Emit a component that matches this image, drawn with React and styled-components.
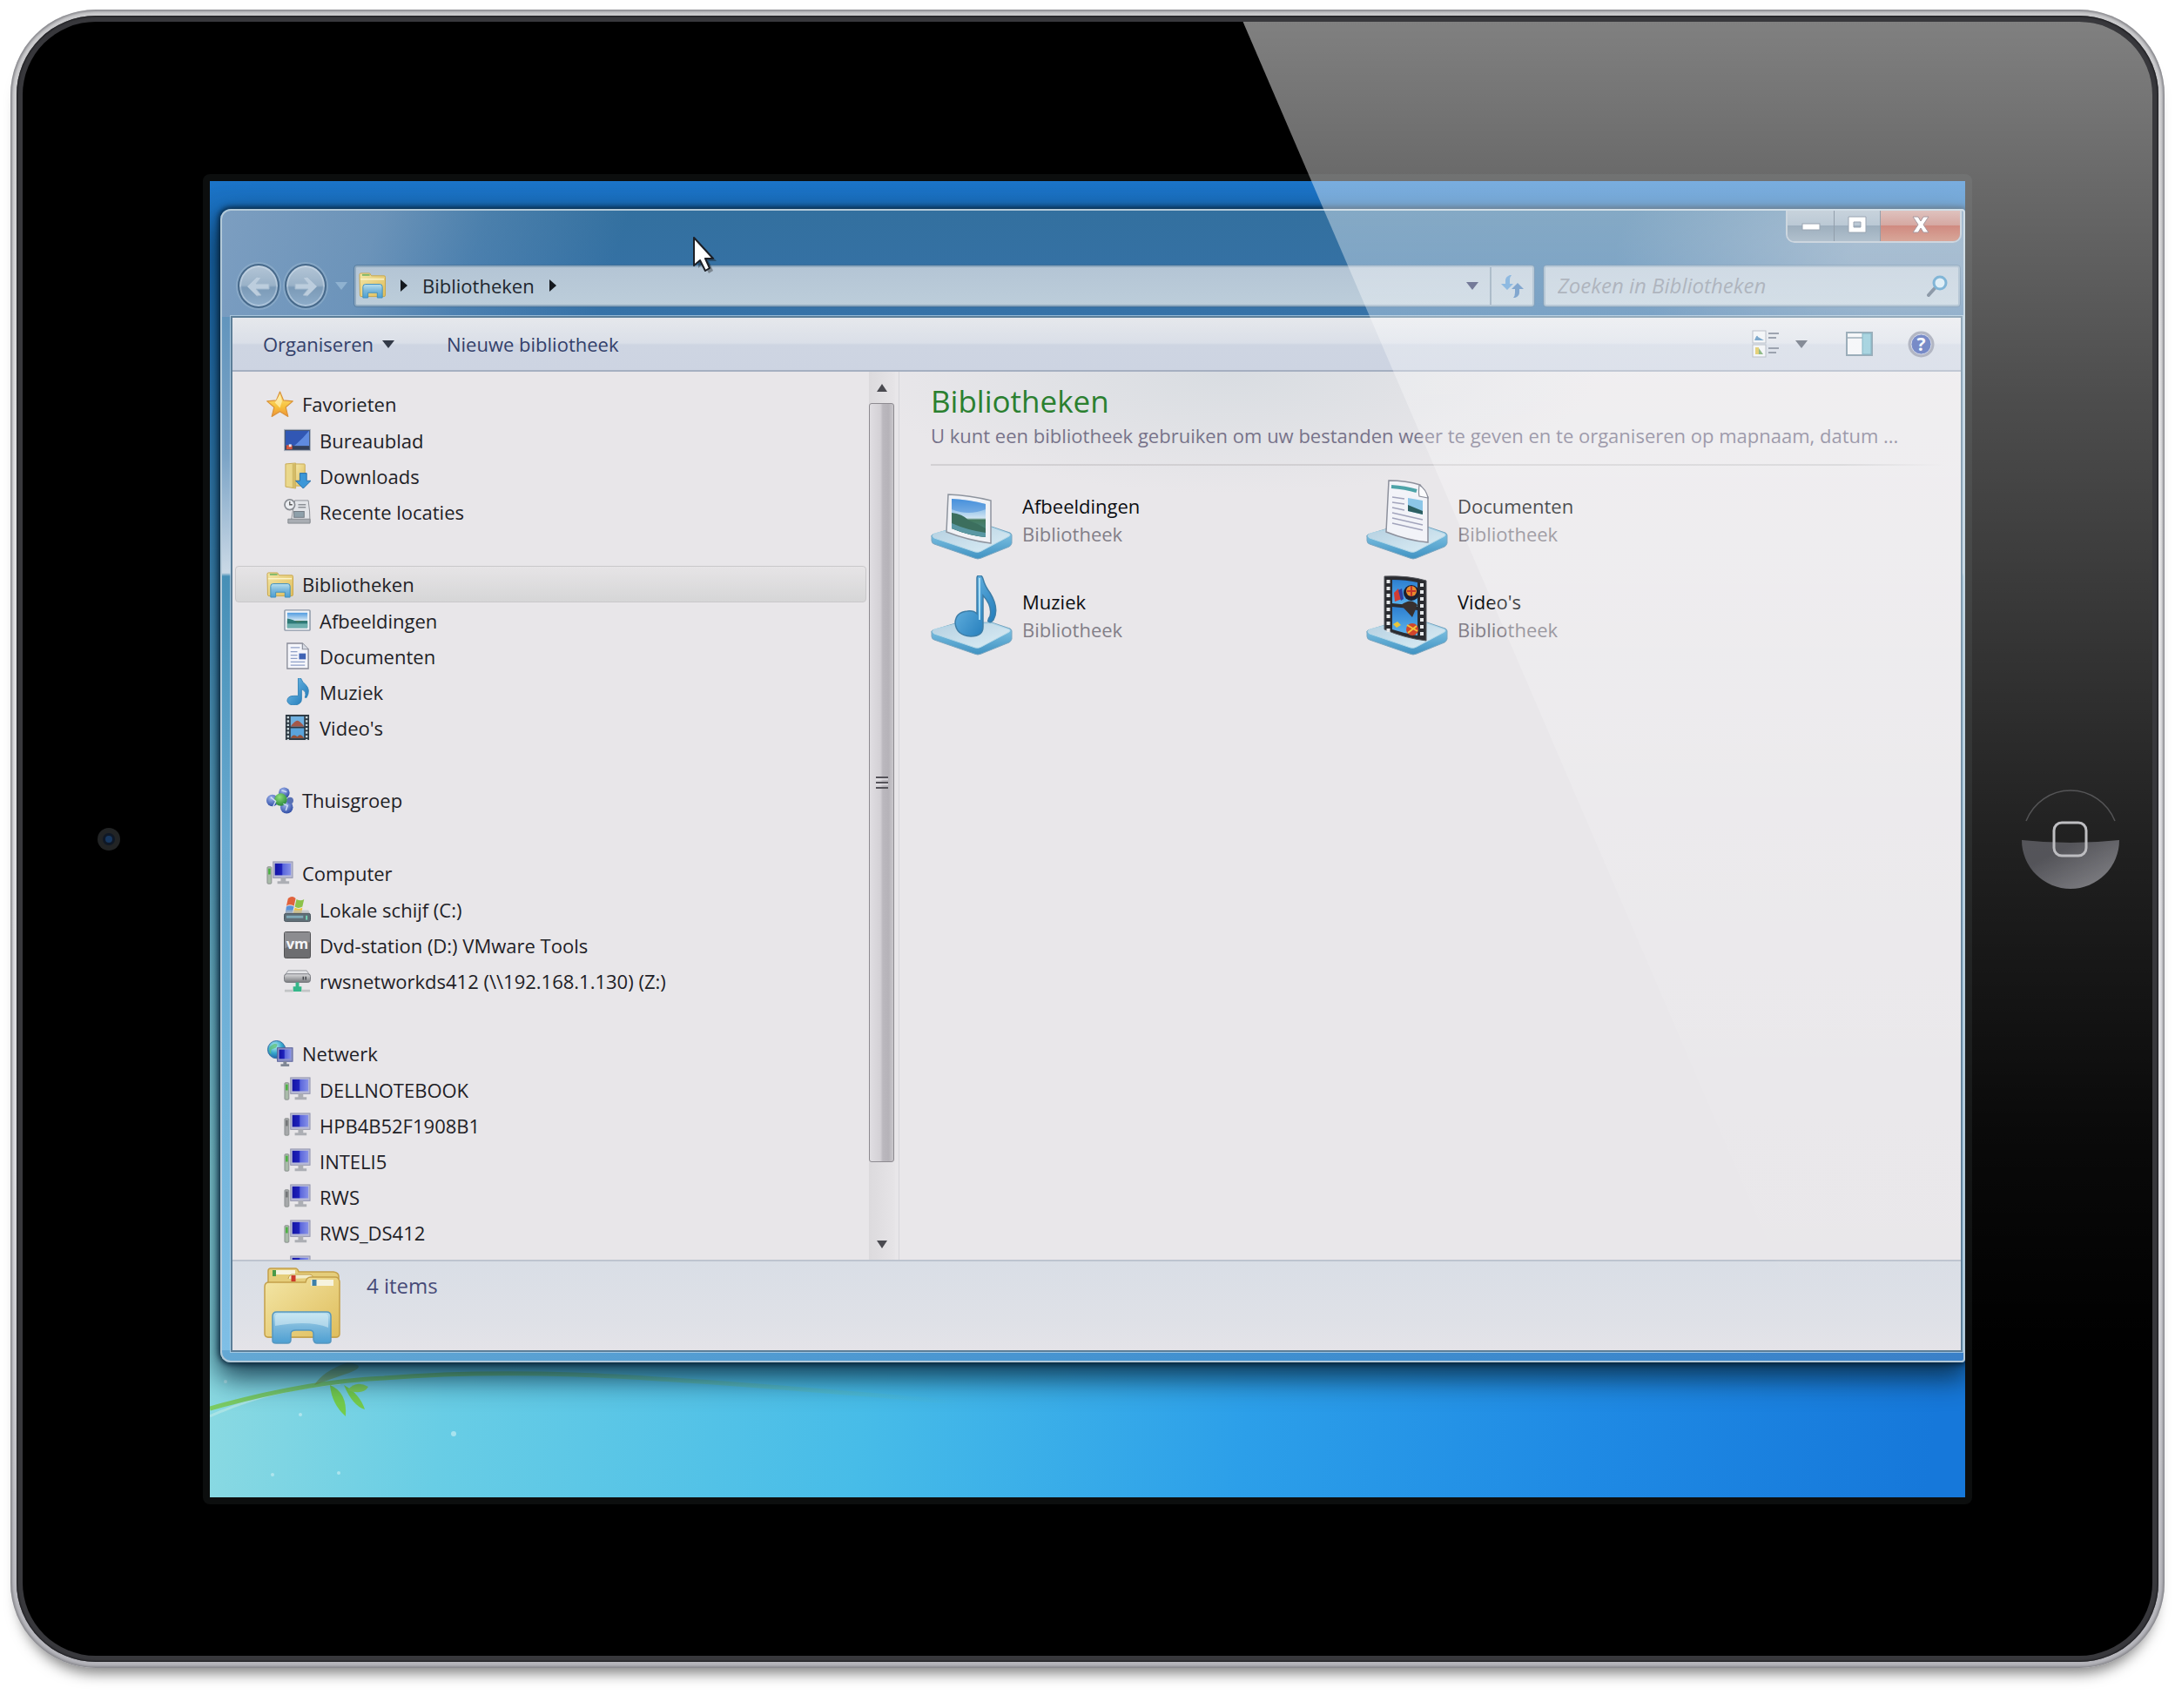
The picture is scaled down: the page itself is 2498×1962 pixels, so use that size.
import React from "react";
import styled, { createGlobalStyle } from "styled-components";

const GlobalStyle = createGlobalStyle`
  *, *::before, *::after { box-sizing: border-box; }
  body {
    margin: 0;
    background: #fff;
    font-family: "Open Sans", "Noto Sans", sans-serif;
    font-size: 22px;
    line-height: 32px;
    color: #1e2126;
  }
  button {
    font: inherit;
    color: inherit;
    background: none;
    border: 0;
    margin: 0;
    padding: 0;
    text-align: left;
    cursor: default;
  }
  svg { display: block; flex: none; }
`;

/* ---------- tablet ---------- */

const Page = styled.div`
  padding: 11px 12px 46px;
`;

const Shell = styled.div`
  padding: 7px;
  border-radius: 98px;
  background: linear-gradient(#c9c9cb, #e2e2e4 30%, #dcdce0 70%, #b4b4ba);
  box-shadow: inset 0 0 3px 2px #85858a, 0 16px 16px -10px rgba(0, 0, 0, 0.5);
`;

const Rim = styled.div`
  padding: 7px;
  border-radius: 91px;
  background: #38383c;
  box-shadow: inset 0 0 2px 1px #1a1a1d;
`;

const Face = styled.div`
  position: relative;
  display: flex;
  align-items: center;
  padding: 175px 0 174px;
  border-radius: 84px;
  background: #000;
  overflow: hidden;
`;

const Side = styled.div`
  flex: none;
  width: 207px;
  display: flex;
  justify-content: center;
  padding: ${(p) => (p.$home ? "0 0 0 18px" : "0 10px 0 0")};
`;

const HomeButton = styled.button`
  width: 114px;
  height: 114px;
  border-radius: 50%;
`;

const Bezel = styled.div`
  flex: 1;
  min-width: 0;
  padding: 8px;
  border-radius: 8px;
  background: #0c0e0e;
`;

const Glare = styled.div`
  position: absolute;
  inset: 0;
  pointer-events: none;
  clip-path: polygon(57.3% 0, 100% 0, 100% 100%, 90.3% 100%);
  background: linear-gradient(
    rgba(255, 255, 255, 0.5),
    rgba(255, 255, 255, 0.41) 10%,
    rgba(255, 255, 255, 0.3) 23%,
    rgba(255, 255, 255, 0.13) 50%,
    rgba(255, 255, 255, 0.04) 68%,
    rgba(255, 255, 255, 0) 82%
  );
`;

const Desktop = styled.div`
  position: relative;
  display: flex;
  aspect-ratio: 4 / 3;
  padding: 32px 0 155px 12px;
  overflow: hidden;
  background:
    linear-gradient(rgba(27, 116, 200, 1), rgba(24, 104, 176, 1) 6%, rgba(24, 110, 170, 0) 75%),
    linear-gradient(97deg, #94dde1 4%, #68cde5 20%, #47bce8 42%, #2c9fe9 62%, #1f8ae4 80%, #1678da 98%);
`;

const Branch = styled.svg`
  position: absolute;
  left: 0;
  bottom: 0;
`;

const Pointer = styled.svg`
  position: absolute;
  left: 554px;
  top: 64px;
`;

/* ---------- window ---------- */

const Window = styled.section`
  position: relative;
  flex: 1;
  min-width: 0;
  display: flex;
  flex-direction: column;
  border: 2px solid #b3c9d8;
  border-radius: 12px 4px 4px 12px;
  background:
    linear-gradient(108deg, rgba(132, 163, 196, 0.9), rgba(126, 159, 193, 0.75) 9%, rgba(110, 150, 190, 0.4) 15%, rgba(90, 140, 185, 0) 23%) no-repeat 0 0 / 100% 122px,
    radial-gradient(ellipse 340px 150px at 97% 50px, rgba(140, 165, 190, 0.7) 20%, rgba(140, 165, 190, 0)) no-repeat 0 0 / 100% 122px,
    linear-gradient(#33709f, #3672a8) no-repeat 0 0 / 100% 122px,
    linear-gradient(90deg, #64a8d4, #3f8fd0 60%, #3a80c8) no-repeat 0 100% / 100% 12px,
    linear-gradient(#6295bd 122px, #7aa3c6 280px, #cbd9e6 416px, #468fb6 420px, #67a9d0 55%, #7fbfe6);
  box-shadow: 0 0 6px 2px rgba(4, 30, 52, 0.9), 0 14px 32px 4px rgba(10, 40, 60, 0.85);
`;

const Header = styled.header`
  display: flex;
  flex-direction: column;
  gap: 24px;
  padding-bottom: 9px;
`;

const Caption = styled.div`
  display: flex;
  justify-content: flex-end;
  padding-right: 2px;
`;

const CaptionGroup = styled.div`
  display: flex;
  height: 37px;
  border: 2px solid #aebdcb;
  border-top: 0;
  border-radius: 0 0 10px 10px;
  overflow: hidden;
`;

const CaptionButton = styled.button`
  display: flex;
  align-items: center;
  justify-content: center;
  width: ${(p) => (p.$close ? 92 : 53)}px;
  padding-bottom: 4px;
  border-left: ${(p) => (p.$first ? 0 : 1)}px solid #4d6276;
  background: ${(p) =>
    p.$close
      ? "linear-gradient(#c99a94, #bb7065 48%, #b2402f 50%, #c0705a)"
      : "linear-gradient(#a3b5c5, #8fa6ba 48%, #5f7c94 50%, #8099ae)"};
`;

const NavRow = styled.div`
  display: flex;
  align-items: center;
  padding: 0 4px 0 18px;
`;

const History = styled.div`
  display: flex;
  align-items: center;
  gap: 6px;
  margin-right: 8px;
`;

const RoundButton = styled.button`
  display: flex;
  align-items: center;
  justify-content: center;
  width: 48px;
  height: 51px;
  border: 2px solid #47698a;
  border-radius: 50%;
  background: linear-gradient(#b3c5d6, #9ab2c8 48%, #7b9ab7 54%, #8eadca);
  box-shadow: inset 0 0 0 2px rgba(220, 232, 244, 0.4), 0 0 0 2px rgba(170, 195, 215, 0.35);
`;

const HistoryMenu = styled.button`
  padding: 8px 0 8px 4px;
`;

const Field = styled.div`
  display: flex;
  align-items: center;
  height: 47px;
  border: 2px solid #8fa9bf;
  outline: 1px solid rgba(70, 105, 140, 0.5);
  border-radius: 3px;
  background: linear-gradient(#b4c5d5, #bccdda);
`;

const Address = styled(Field)`
  flex: 1;
  min-width: 0;
  margin-right: 11px;
  padding-left: 3px;
`;

const Crumbs = styled.nav`
  flex: 1;
  display: flex;
  align-items: center;
  gap: 17px;
  padding-bottom: 2px;
  color: #20262e;
`;

const AddressButton = styled.button`
  display: flex;
  align-items: center;
  justify-content: center;
  align-self: stretch;
  width: ${(p) => (p.$divided ? 49 : 40)}px;
  border-left: ${(p) => (p.$divided ? "2px solid #7f97ac" : "0")};
`;

const Search = styled(Field)`
  width: 478px;
  padding: 0 12px 0 12px;
`;

const SearchInput = styled.input`
  flex: 1;
  min-width: 0;
  padding: 0 2px 2px;
  border: 0;
  outline: 0;
  background: none;
  font: italic 24px/32px "Open Sans", "Noto Sans", sans-serif;
  &::placeholder { color: #838c9a; opacity: 1; }
`;

const Client = styled.div`
  flex: 1;
  min-height: 0;
  display: flex;
  flex-direction: column;
  margin: 0 1px 10px 10px;
  border: 2px solid #5c7e98;
  outline: 1px solid rgba(190, 215, 232, 0.7);
  background: #e8e6e9;
`;

const Toolbar = styled.div`
  display: flex;
  align-items: center;
  flex: none;
  height: 62px;
  padding: 0 30px 0 35px;
  border-bottom: 2px solid #a5afc1;
  background: linear-gradient(#e6e8ec, #dadfe8 48%, #ced5e2 52%, #cdd4e2);
  color: #33406a;
`;

const ToolButton = styled.button`
  display: flex;
  align-items: center;
  gap: 10px;
  margin-right: ${(p) => p.$gap || 0}px;
`;

const Spacer = styled.div`
  flex: 1;
`;

const Body = styled.div`
  flex: 1;
  min-height: 0;
  display: flex;
`;

const Tree = styled.nav`
  flex: none;
  width: 731px;
  padding: 16px 3px 0;
  overflow: hidden;
`;

const Group = styled.ul`
  list-style: none;
  margin: 0 0 42px;
  padding: 0;
`;

const TreeRow = styled.button`
  display: flex;
  align-items: center;
  gap: 10px;
  width: 100%;
  height: ${(p) => (p.$child ? 41 : 42)}px;
  padding-left: ${(p) => (p.$child ? 55 : 35)}px;
  border: 1px solid ${(p) => (p.$active ? "#c9c8ca" : "transparent")};
  border-radius: 4px;
  background: ${(p) => (p.$active ? "linear-gradient(#e6e4e6, #d6d6d7)" : "none")};
  white-space: nowrap;
`;

const Scrollbar = styled.div`
  flex: none;
  width: 30px;
  display: flex;
  flex-direction: column;
  background: linear-gradient(90deg, #dcdadd, #e6e4e7);
`;

const ScrollButton = styled.button`
  display: flex;
  align-items: center;
  justify-content: center;
  flex: none;
  height: 36px;
`;

const ScrollTrack = styled.div`
  flex: 1;
  min-height: 0;
`;

const Thumb = styled.div`
  display: flex;
  align-items: center;
  justify-content: center;
  height: 92%;
  margin-right: 1px;
  border: 1px solid #8d8a90;
  border-radius: 3px;
  background: linear-gradient(90deg, #e0dee2, #d3d0d5 45%, #bbb8be 55%, #b6b3b9 80%, #cac8cc);
`;

const Main = styled.main`
  flex: 1;
  min-width: 0;
  margin-left: 4px;
  padding: 11px 20px 0 36px;
  border-left: 1px solid #d6d5da;
  background:
    radial-gradient(ellipse 420px 140px at 380px 0, rgba(206, 214, 220, 0.6), rgba(206, 214, 220, 0)),
    #e9e7ea;
`;

const Title = styled.h1`
  margin: 0;
  font-size: 35px;
  line-height: 46px;
  font-weight: 400;
  color: #2b8030;
`;

const Lead = styled.p`
  margin: 0 40px 17px 0;
  color: #77738a;
  white-space: nowrap;
`;

const Rule = styled.hr`
  height: 2px;
  margin: 0;
  border: 0;
  background: linear-gradient(90deg, #d2d0d3, #cfced1 90%, rgba(207, 206, 209, 0));
`;

const Libraries = styled.div`
  display: grid;
  grid-template-columns: repeat(auto-fill, 500px);
  margin-top: 7px;
`;

const Library = styled.button`
  display: flex;
  align-items: center;
  gap: 11px;
  height: 110px;
`;

const Name = styled.span`
  display: block;
  color: #0c0e12;
`;

const Kind = styled.span`
  display: block;
  color: #827e88;
`;

const Status = styled.footer`
  display: flex;
  align-items: flex-start;
  flex: none;
  gap: 30px;
  height: 104px;
  padding: 7px 0 0 36px;
  border-top: 2px solid #bdc4cf;
  background: linear-gradient(#d9dee6, #dfe1e7 70%, #e4e3e8);
  color: #474b78;
  font-size: 24px;
`;

const StatusText = styled.span`
  padding-top: 5px;
`;

/* ---------- drawings ---------- */

const Paints = () => (
  <svg width="0" height="0" style={{ position: "absolute" }} aria-hidden="true">
    <defs>
      <linearGradient id="folder" x1="0" y1="0" x2="1" y2="1">
        <stop offset="0" stopColor="#f3e6a6" />
        <stop offset="1" stopColor="#dfbd5c" />
      </linearGradient>
      <linearGradient id="stand" x1="0" y1="0" x2="0" y2="1">
        <stop offset="0" stopColor="#b9dfee" />
        <stop offset=".45" stopColor="#7db9dc" />
        <stop offset="1" stopColor="#4d9fd2" />
      </linearGradient>
      <linearGradient id="screen" x1="0" y1="0" x2="1" y2="0">
        <stop offset="0" stopColor="#1414a4" />
        <stop offset=".42" stopColor="#1e22bc" />
        <stop offset=".5" stopColor="#5a66dc" />
        <stop offset="1" stopColor="#8791e8" />
      </linearGradient>
      <linearGradient id="slab" x1="0" y1="0" x2="1" y2="1">
        <stop offset="0" stopColor="#b4cfe0" />
        <stop offset="1" stopColor="#dceef6" />
      </linearGradient>
      <linearGradient id="slabside" x1="0" y1="0" x2="0" y2="1">
        <stop offset="0" stopColor="#8fcdea" />
        <stop offset="1" stopColor="#3f92c2" />
      </linearGradient>
      <linearGradient id="note" x1="0" y1="0" x2="1" y2="1">
        <stop offset="0" stopColor="#7cc4ec" />
        <stop offset="1" stopColor="#1672b4" />
      </linearGradient>
      <linearGradient id="photo" x1="0" y1="0" x2="0" y2="1">
        <stop offset="0" stopColor="#4f9be0" />
        <stop offset=".5" stopColor="#cfe4f2" />
        <stop offset=".55" stopColor="#44795e" />
        <stop offset="1" stopColor="#4d8d96" />
      </linearGradient>
      <linearGradient id="star" x1="0" y1="0" x2="0" y2="1">
        <stop offset="0" stopColor="#fbe48a" />
        <stop offset=".6" stopColor="#f7c23c" />
        <stop offset="1" stopColor="#ee9138" />
      </linearGradient>
      <radialGradient id="globe" cx=".4" cy=".3" r=".8">
        <stop offset="0" stopColor="#bff0f4" />
        <stop offset=".5" stopColor="#35a6cc" />
        <stop offset="1" stopColor="#1c4f9c" />
      </radialGradient>
      <radialGradient id="orb" cx=".4" cy=".3" r=".8">
        <stop offset="0" stopColor="#9fb4ec" />
        <stop offset="1" stopColor="#203f9c" />
      </radialGradient>
      <radialGradient id="leaf" cx=".4" cy=".3" r=".8">
        <stop offset="0" stopColor="#8fe07a" />
        <stop offset="1" stopColor="#1d7d34" />
      </radialGradient>
      <linearGradient id="metal" x1="0" y1="0" x2="0" y2="1">
        <stop offset="0" stopColor="#dcdcde" />
        <stop offset="1" stopColor="#77797d" />
      </linearGradient>
      <linearGradient id="dish" x1="0" y1="0" x2="1" y2="1">
        <stop offset=".3" stopColor="#3c3c42" />
        <stop offset="1" stopColor="#77777c" />
      </linearGradient>
      <linearGradient id="twig" x1="0" y1="0" x2="1" y2="0">
        <stop offset="0" stopColor="#7bcb62" />
        <stop offset=".35" stopColor="#6cc07c" />
        <stop offset="1" stopColor="#5fbcb0" stopOpacity="0" />
      </linearGradient>
      <linearGradient id="balloon" x1="0" y1="0" x2="0" y2="1">
        <stop offset="0" stopColor="#2d7fd0" />
        <stop offset="1" stopColor="#5db4ee" />
      </linearGradient>
    </defs>
  </svg>
);

const Small = ({ children }) => (
  <svg width="31" height="31" viewBox="0 0 32 32" aria-hidden="true">{children}</svg>
);

const FolderIcon = () => (
  <Small>
    <path d="M1 3.500q0-1.500 1.500-1.500H13l2 3h15q1.500 0 1.500 1.500V28q0 1.500-1.500 1.500H3Q1.500 29.500 1.500 28Z" fill="url(#folder)" stroke="#c9a548" />
    <path d="M4 4h9" stroke="#7fb86a" strokeWidth="2" />
    <path d="M2 9h28" stroke="#fbf3c8" strokeWidth="1.500" />
    <path d="M5 31V18q0-3 3-3h17q3 0 3 3v13h-6v-6H11v6Z" fill="url(#stand)" stroke="#3f8fc0" />
  </Small>
);

const StarIcon = () => (
  <Small>
    <path d="M16 1l4.300 10.300 11 .9-8.400 7.200 2.700 11L16 24.400 6.400 30.400l2.700-11L.7 12.200l11-.9Z" fill="url(#star)" stroke="#d9923a" strokeWidth="1.200" strokeLinejoin="round" />
    <path d="M16 4l2.600 8-2.600 8-6-6Z" fill="#fff3bc" opacity=".7" />
  </Small>
);

const DesktopIcon = () => (
  <Small>
    <rect x=".5" y="3.500" width="31" height="25" fill="#4b5a72" stroke="#aeb4bf" />
    <rect x="2" y="5" width="28" height="18" fill="#3157b4" />
    <path d="M30 5v18H12Q22 15 30 5Z" fill="#5f8be0" />
    <rect x="2" y="23" width="28" height="4" fill="#33405a" />
    <rect x="3" y="22" width="7" height="5" fill="#d6553c" />
    <rect x="6" y="21" width="3" height="3" fill="#e9e9f0" />
  </Small>
);

const DownloadsIcon = () => (
  <Small>
    <path d="M2 2l12-1v30L2 29Z" fill="#ead88c" stroke="#c8a953" />
    <path d="M14 2h10q1 0 1 1v25H14Z" fill="url(#folder)" stroke="#c8a953" />
    <path d="M10 2l4-1v30l-4-1Z" fill="#d3bb68" />
    <path d="M19 13h8v9h5l-9 9-9-9h5Z" fill="#3c97d8" stroke="#2a6ea8" />
  </Small>
);

const RecentIcon = () => (
  <Small>
    <path d="M13 3h16q2 12 2 26H7q2-1 3-10Z" fill="#e2e4e8" stroke="#8c9096" />
    <path d="M5 25h26v5H5Z" fill="#a9adb3" stroke="#85898f" />
    <rect x="12" y="16" width="12" height="7" fill="#8ea0aa" stroke="#737a82" />
    <path d="M17 8h9M17 11h9" stroke="#8c9096" strokeWidth="1.500" />
    <circle cx="7" cy="8" r="6" fill="#eceef2" stroke="#888c92" strokeWidth="1.800" />
    <path d="M7 4v4h3" stroke="#555" fill="none" strokeWidth="1.300" />
  </Small>
);

const PictureIcon = () => (
  <Small>
    <rect x="1" y="4" width="30" height="24" rx="1" fill="#f3f5f8" stroke="#8c97a6" strokeWidth="1.500" />
    <rect x="4" y="7" width="24" height="18" fill="url(#photo)" />
    <path d="M4 14q8 1 12 5 7-3 12-2v8H4Z" fill="#2f7a78" />
    <path d="M4 20h24v5H4Z" fill="#6fb0ae" />
  </Small>
);

const DocIcon = () => (
  <Small>
    <path d="M4 1h18l7 7v23H4Z" fill="#f5f6fb" stroke="#898c99" strokeWidth="1.400" />
    <path d="M22 1v7h7" fill="#d9dde6" stroke="#898c99" strokeWidth="1.200" />
    <path d="M8 6h11M8 11h8M8 15h8M8 19h8M8 23h17M8 27h17" stroke="#8fa0c8" strokeWidth="1.300" />
    <rect x="18" y="13" width="8" height="7" fill="#3f63b4" />
  </Small>
);

const MusicIcon = () => (
  <Small>
    <path d="M17 0h3q2 5 6 8 6 6 1 15h-2q3-7-4-10v12q0 6-8 7-8 0-9-5 0-6 8-6h5Z" fill="url(#note)" stroke="#3a86b8" />
  </Small>
);

const VideoIcon = () => (
  <Small>
    <rect x="2" y="1" width="28" height="30" fill="#2d3842" />
    <rect x="8" y="3" width="16" height="12" fill="#6fb0e0" />
    <rect x="8" y="17" width="16" height="12" fill="#5aa4dc" />
    <path d="M8 15q5-7 8-7t8 7Z" fill="#a3584a" />
    <path d="M8 29q3-6 8-2 4-5 8 2Z" fill="#93533c" />
    <path d="M5 3v28M27 3v28" stroke="#c9d8dc" strokeWidth="2.500" strokeDasharray="2.500 2" />
  </Small>
);

const HomegroupIcon = () => (
  <Small>
    <circle cx="21" cy="7" r="6.500" fill="url(#orb)" />
    <circle cx="7" cy="16" r="7" fill="url(#orb)" />
    <circle cx="24" cy="24" r="7.500" fill="url(#orb)" />
    <circle cx="28" cy="16" r="4" fill="#5871b4" />
    <circle cx="17" cy="15" r="7.500" fill="url(#leaf)" />
    <path d="M5 12l6 5-3 6M20 20l5 2-2 6M18 4l6 2" stroke="#cfdcf4" strokeWidth="1.500" fill="none" />
  </Small>
);

const ComputerIcon = ({ off }) => (
  <Small>
    <rect x="1" y="8" width="5" height="20" rx="1" fill={off ? "#a6a8aa" : "#a9bba9"} stroke="#8b8f8f" />
    <path d="M3.500 10v7" stroke={off ? "#707274" : "#46b03c"} strokeWidth="2.500" />
    <rect x="8" y="2" width="23" height="19" fill="#b9bbd6" stroke="#9294ac" />
    <rect x="10" y="4" width="19" height="14" fill="url(#screen)" />
    <path d="M17 21h6v4h4v3H13v-3h4Z" fill="#acaeb4" />
  </Small>
);

const DiskIcon = () => (
  <Small>
    <path d="M5 3q5-4 9 0l-2 9q-5-3-9 0Z" fill="#e0623c" />
    <path d="M15 4q5 3 9 0l-2 9q-5 3-9 0Z" fill="#8cc24a" />
    <path d="M3 13q4-3 9 0l-2 7H2Z" fill="#5b93d8" />
    <path d="M13 14q5 3 9 0l-1 7H11Z" fill="#f0c63e" />
    <path d="M3 17h26l3 6H0Z" fill="#b7bcc0" opacity=".65" />
    <rect x=".5" y="21" width="31" height="9.500" rx="2" fill="#5f6e77" stroke="#48545c" />
    <path d="M3 25h20" stroke="#7fa9b8" strokeWidth="3" />
    <path d="M27 23.500v5" stroke="#74d6b4" strokeWidth="2" />
  </Small>
);

const VmIcon = () => (
  <Small>
    <rect x=".5" y=".5" width="31" height="31" rx="2" fill="#6d6d70" stroke="#4d4d50" />
    <path d="M1 1h30v12Q15 12 1 20Z" fill="#8c8c90" />
    <text x="16" y="21" textAnchor="middle" fontSize="17" fontWeight="700" fill="#f4f4f6">vm</text>
  </Small>
);

const NetDriveIcon = () => (
  <Small>
    <path d="M5 4h22l4 6H1Z" fill="#e4e5e8" stroke="#989aa0" />
    <rect x=".5" y="8" width="31" height="10" rx="3" fill="url(#metal)" stroke="#77797f" />
    <path d="M23 11v4M26 11v4" stroke="#44474c" strokeWidth="1.500" />
    <path d="M14 18h4v5h3v6H11v-6h3Z" fill="#35b78a" />
    <path d="M1 28h10M21 28h10" stroke="#c2c4c6" strokeWidth="3" />
  </Small>
);

const NetworkIcon = () => (
  <Small>
    <circle cx="12" cy="11" r="10.500" fill="url(#globe)" stroke="#3a6fa4" />
    <path d="M4 8q5-6 9-3-1 5-5 5t-2 7q-4-3-2-9Z" fill="#5cc07c" opacity=".8" />
    <rect x="13" y="9" width="18" height="16" fill="#8f96c8" stroke="#565e98" />
    <rect x="15" y="11" width="14" height="11" fill="url(#screen)" />
    <path d="M20 25h4v3h3v3h-10v-3h3Z" fill="#7f8794" />
  </Small>
);

const StackIcon = () => (
  <svg width="88" height="88" viewBox="0 0 88 88" aria-hidden="true">
    <path d="M5 4q0-3 3-3h28q3 0 4 4h40q6 1 6 5v66q0 4-4 4H5Z" fill="#e5cd7a" stroke="#c4a04a" strokeWidth="1.500" />
    <path d="M14 3h22v5H14Z" fill="#f6f3df" />
    <path d="M12 3v7" stroke="#4b9a48" strokeWidth="4" />
    <path d="M28 13q1-5 5-5h20q3 0 4 4" fill="#f3ecc9" stroke="#c4a04a" />
    <path d="M34 9v7" stroke="#cc3b2c" strokeWidth="5" />
    <path d="M1 22q0-5 5-5h42q1-6 6-6h28q4 0 5 5v60q0 4-4 4H5q-4 0-4-4Z" fill="url(#folder)" stroke="#c4a04a" strokeWidth="1.500" />
    <rect x="54" y="14" width="26" height="7" fill="#f6f3df" />
    <path d="M58 14v7" stroke="#3d80a8" strokeWidth="5" />
    <path d="M10 84V56q0-5 5-5h57q5 0 5 5v28q0 3-4 3H61q-3 0-4-4v-7q0-4-5-4H37q-6 0-6 4v7q0 4-4 4H14q-4 0-4-3Z" fill="url(#stand)" stroke="#5597c0" strokeWidth="1.500" />
    <path d="M13 57q0-4 4-4h53q4 0 4 4v12Q52 60 13 67Z" fill="#d8eef6" opacity=".55" />
  </svg>
);

const Big = ({ children }) => (
  <svg width="94" height="92" viewBox="0 0 94 92" aria-hidden="true">
    <path d="M1 66q-1-2 1-3l33-10q18 2 35 1l21 7q2 1 2 3v9q-1 3-3 4L58 90q-4 2-8 0L4 74q-3-1-3-4Z" fill="url(#slabside)" stroke="#7ba6c0" strokeWidth="1" />
    <path d="M2 64q0-1 2-2l32-8q18 2 34 1l20 7q2 1 0 3L58 82q-3 2-7 1L4 67q-2-1-2-3Z" fill="url(#slab)" stroke="#b4d8e8" />
    {children}
  </svg>
);

const BigPicture = () => (
  <Big>
    <path d="M20 17q25 1 49 7v49Q44 70 18 60Z" fill="#f1f2f6" stroke="#8e949e" strokeWidth="1.500" />
    <path d="M24 22q20 1 39 6v38q-20-2-39-10Z" fill="url(#photo)" />
    <path d="M24 22q20 1 39 6v6q-20 8-39 0Z" fill="#3d86d8" opacity=".5" />
    <path d="M24 38q12 1 20 9 9 3 19 9v10q-20-2-39-10Z" fill="#3c6f5e" />
    <path d="M24 50q18 8 39 11v5q-20-2-39-10Z" fill="#5a98a4" />
  </Big>
);

const BigDocument = () => (
  <Big>
    <path d="M26 1q20 0 36 5l9 14v52Q48 70 23 60Z" fill="#f2f3f8" stroke="#8d909c" strokeWidth="1.500" />
    <path d="M61 6q-1 9 0 13l10 2Q69 11 61 6Z" fill="#fbfbfd" stroke="#8d909c" strokeWidth="1.200" />
    <path d="M29 8q16 1 29 5" fill="none" stroke="#4da3a8" strokeWidth="4" />
    <path d="M30 20l14 2M30 26l14 2M30 32l14 3M30 38l35 8M30 44l35 8M30 50l35 8" stroke="#a2a4bc" strokeWidth="1.600" />
    <path d="M48 21l17 3v16l-17-4Z" fill="#8cc6e8" />
    <path d="M48 29l17 7v4l-17-4Z" fill="#2c5f62" />
  </Big>
);

const BigMusic = () => (
  <Big>
    <path d="M53 3q0-3 3-3 3 0 4 4 2 8 8 16 11 18 4 31-3 4-6 2-1-2 2-6 3-12-8-24v36q0 11-14 11-17-1-18-16 1-12 14-13 7-1 11 3Z" fill="url(#note)" stroke="#3d7ea8" strokeWidth="1.500" />
    <path d="M56 3v48" stroke="#a9dcf4" strokeWidth="2" />
  </Big>
);

const BigVideo = () => (
  <Big>
    <path d="M21 1q28-1 48 5v69Q44 72 21 62Z" fill="#2b2c31" stroke="#55575c" />
    <path d="M30 5q16 0 29 3v28q-14-3-29-4Z" fill="url(#balloon)" />
    <path d="M30 36q15 1 29 4v29q-14-2-29-7Z" fill="url(#balloon)" />
    <path d="M32 20l5-5 4 12-8 3Z" fill="#d03c34" />
    <path d="M37 17l4-2 2 12-3 2Z" fill="#2e3fa0" />
    <circle cx="52" cy="20" r="9" fill="#1e2030" />
    <circle cx="52" cy="18" r="6" fill="#e98a2c" />
    <path d="M52 12v12M47 18h10" stroke="#c6362c" strokeWidth="2" />
    <path d="M40 34q12-9 19 0l-6 14Z" fill="#38302f" />
    <circle cx="53" cy="62" r="7" fill="#d2452c" />
    <path d="M47 57l12 7M48 66l10-8" stroke="#f2c33a" strokeWidth="2" />
    <path d="M31 56l5-3 4 4-5 3Z" fill="#e8c53a" />
    <path d="M25.500 5v60M64 9v64" stroke="#e6e8ea" strokeWidth="4" strokeDasharray="4 4" />
  </Big>
);

const Triangle = ({ dir = "down", color = "#333a48", w = 14 }) => (
  <svg width={dir === "right" ? 8 : w} height={dir === "right" ? 14 : 9} viewBox={dir === "right" ? "0 0 9 15" : "0 0 14 9"} preserveAspectRatio="none" aria-hidden="true">
    <path d={dir === "right" ? "M0 0l9 7.500-9 7.500Z" : dir === "up" ? "M0 9l7-9 7 9Z" : "M0 0h14l-7 9Z"} fill={color} />
  </svg>
);

const RoundArrow = ({ flip }) => (
  <svg width="30" height="28" viewBox="0 0 30 28" aria-hidden="true">
    <path
      d={flip ? "M28 14L17 3l-5 1 6 7H3v6h15l-6 7 5 1Z" : "M2 14L13 3l5 1-6 7h15v6H12l6 7-5 1Z"}
      fill="#bccddd"
      stroke="#a3b9cd"
    />
  </svg>
);

/* ---------- data ---------- */

const tree = [
  {
    label: "Favorieten",
    icon: <StarIcon />,
    items: [
      ["Bureaublad", <DesktopIcon />],
      ["Downloads", <DownloadsIcon />],
      ["Recente locaties", <RecentIcon />],
    ],
  },
  {
    label: "Bibliotheken",
    icon: <FolderIcon />,
    active: true,
    items: [
      ["Afbeeldingen", <PictureIcon />],
      ["Documenten", <DocIcon />],
      ["Muziek", <MusicIcon />],
      ["Video's", <VideoIcon />],
    ],
  },
  { label: "Thuisgroep", icon: <HomegroupIcon />, items: [] },
  {
    label: "Computer",
    icon: <ComputerIcon />,
    items: [
      ["Lokale schijf (C:)", <DiskIcon />],
      ["Dvd-station (D:) VMware Tools", <VmIcon />],
      ["rwsnetworkds412 (\\\\192.168.1.130) (Z:)", <NetDriveIcon />],
    ],
  },
  {
    label: "Netwerk",
    icon: <NetworkIcon />,
    items: [
      ["DELLNOTEBOOK", <ComputerIcon />],
      ["HPB4B52F1908B1", <ComputerIcon off />],
      ["INTELI5", <ComputerIcon />],
      ["RWS", <ComputerIcon off />],
      ["RWS_DS412", <ComputerIcon />],
      ["", <ComputerIcon off />],
    ],
  },
];

const libraries = [
  ["Afbeeldingen", <BigPicture />],
  ["Documenten", <BigDocument />],
  ["Muziek", <BigMusic />],
  ["Video's", <BigVideo />],
];

/* ---------- app ---------- */

function TitleBar() {
  return (
    <Header>
      <Caption>
        <CaptionGroup>
          <CaptionButton $first aria-label="Minimaliseren">
            <svg width="22" height="16" viewBox="0 0 22 16"><rect x="1" y="7" width="20" height="7" fill="#fff" stroke="#596b80" /></svg>
          </CaptionButton>
          <CaptionButton aria-label="Maximaliseren">
            <svg width="22" height="20" viewBox="0 0 22 20">
              <path fillRule="evenodd" d="M1 1h20v18H1ZM7 7v6h8V7Z" fill="#fff" stroke="#596b80" />
            </svg>
          </CaptionButton>
          <CaptionButton $close aria-label="Sluiten">
            <svg width="22" height="20" viewBox="0 0 22 20">
              <path d="M2 1h6l3 5 3-5h6l-6 9 6 9h-6l-3-5-3 5H2l6-9Z" fill="#fff" stroke="#6e5560" />
            </svg>
          </CaptionButton>
        </CaptionGroup>
      </Caption>
      <NavRow>
        <History>
          <RoundButton aria-label="Vorige"><RoundArrow /></RoundButton>
          <RoundButton aria-label="Volgende"><RoundArrow flip /></RoundButton>
          <HistoryMenu aria-label="Recente pagina's"><Triangle color="#8fb2d0" /></HistoryMenu>
        </History>
        <Address>
          <Crumbs aria-label="Adres">
            <FolderIcon />
            <Triangle dir="right" color="#14181e" />
            <button>Bibliotheken</button>
            <Triangle dir="right" color="#14181e" />
          </Crumbs>
          <AddressButton aria-label="Vorige locaties"><Triangle color="#262f5e" /></AddressButton>
          <AddressButton $divided aria-label="Vernieuwen">
            <svg width="28" height="28" viewBox="0 0 28 28">
              <path d="M11 1q-5 2-5 6v4H1l7 7 7-7h-4V7q0-4 2-6Z" fill="#4f93d0" />
              <path d="M17 27q5-2 5-6v-4h5l-7-7-7 7h4v4q0 4-2 6Z" fill="#3d76b4" />
            </svg>
          </AddressButton>
        </Address>
        <Search>
          <SearchInput type="search" placeholder="Zoeken in Bibliotheken" aria-label="Zoeken in Bibliotheken" />
          <svg width="24" height="25" viewBox="0 0 24 25" aria-hidden="true">
            <path d="M2 23l8-9" stroke="#4f6379" strokeWidth="4" strokeLinecap="round" />
            <circle cx="15" cy="9" r="7" fill="#cfe6f2" stroke="#3a8cc0" strokeWidth="3" />
          </svg>
        </Search>
      </NavRow>
    </Header>
  );
}

function CommandBar() {
  return (
    <Toolbar>
      <ToolButton $gap={60}>Organiseren <Triangle /></ToolButton>
      <ToolButton>Nieuwe bibliotheek</ToolButton>
      <Spacer />
      <ToolButton $gap={18} aria-label="Weergave">
        <svg width="32" height="32" viewBox="0 0 32 32">
          <rect x="1" y="1" width="15" height="14" fill="#eef1f5" stroke="#9aa2b0" />
          <rect x="1" y="17" width="15" height="14" fill="#eef1f5" stroke="#9aa2b0" />
          <path d="M3 12q3-8 4-4l7 4Z" fill="#3f7fb4" />
          <path d="M4 20h4v8H4Z" fill="#d9bb3c" /><path d="M8 21l5 7H8Z" fill="#5c9a50" />
          <path d="M19 4h12M19 9h9M19 21h12M19 26h9" stroke="#6c7688" strokeWidth="2" />
        </svg>
      </ToolButton>
      <ToolButton $gap={44} aria-label="Meer opties"><Triangle color="#4a5364" /></ToolButton>
      <ToolButton $gap={40} aria-label="Voorbeeldvenster">
        <svg width="31" height="28" viewBox="0 0 31 28">
          <rect x="1" y="1" width="29" height="26" fill="#f1f3f6" stroke="#6b8698" strokeWidth="2" />
          <path d="M2 7h17" stroke="#8ea2b0" strokeWidth="2" />
          <rect x="19" y="2" width="10" height="24" fill="#7fc0d2" stroke="#4f92a8" />
        </svg>
      </ToolButton>
      <ToolButton aria-label="Help">
        <svg width="31" height="31" viewBox="0 0 31 31">
          <circle cx="15.500" cy="15.500" r="15" fill="#8d93a6" />
          <circle cx="15.500" cy="15.500" r="11.500" fill="#3552ac" stroke="#c4cbe0" />
          <text x="15.500" y="23" textAnchor="middle" fontSize="21" fontWeight="700" fill="#f2f4fb">?</text>
        </svg>
      </ToolButton>
    </Toolbar>
  );
}

function NavigationPane() {
  return (
    <>
      <Tree aria-label="Navigatie">
        {tree.map((group) => (
          <Group key={group.label}>
            <li><TreeRow $active={group.active}>{group.icon}{group.label}</TreeRow></li>
            {group.items.map(([label, icon]) => (
              <li key={label}><TreeRow $child>{icon}{label}</TreeRow></li>
            ))}
          </Group>
        ))}
      </Tree>
      <Scrollbar>
        <ScrollButton aria-label="Omhoog"><Triangle dir="up" w={12} color="#4a4a50" /></ScrollButton>
        <ScrollTrack>
          <Thumb>
            <svg width="14" height="16" viewBox="0 0 14 16">
              <path d="M0 2h14M0 8h14M0 14h14" stroke="#55535a" strokeWidth="2" />
              <path d="M0 4h14M0 10h14" stroke="#f0eef2" strokeWidth="1" />
            </svg>
          </Thumb>
        </ScrollTrack>
        <ScrollButton aria-label="Omlaag"><Triangle w={12} color="#4a4a50" /></ScrollButton>
      </Scrollbar>
    </>
  );
}

export default function App() {
  return (
    <Page>
      <GlobalStyle />
      <Paints />
      <Shell>
        <Rim>
          <Face>
            <Side>
              <svg width="28" height="28" viewBox="0 0 28 28" aria-hidden="true">
                <circle cx="14" cy="14" r="13" fill="#222425" />
                <circle cx="14" cy="14" r="7" fill="#0f1826" />
                <circle cx="14" cy="14" r="4" fill="#17375f" />
              </svg>
            </Side>
            <Bezel>
              <Desktop>
                <Branch width="900" height="155" viewBox="0 0 900 155" aria-hidden="true">
                  <path d="M0 62Q70 30 150 24" stroke="#c9eee8" strokeWidth="3" opacity=".5" fill="none" />
                  <path d="M0 53Q110 22 200 18 300 10 420 14T860 46" fill="none" stroke="url(#twig)" strokeWidth="5" />
                  <path d="M138 26q20 8 18 36-16-14-18-36Z" fill="#74cc4c" />
                  <path d="M154 26q18 10 24 28-14-4-24-28Z" fill="#74cc4c" />
                  <path d="M158 32q10-12 24-4-6 10-24 4Z" fill="#7fcf55" />
                  <path d="M120 26q10-16 38-26 28 4-4 14Z" fill="#7d9c3a" opacity=".6" />
                  <g fill="#c4ecf2" opacity=".7">
                    <circle cx="18" cy="22" r="2" /><circle cx="280" cy="82" r="3" /><circle cx="104" cy="60" r="2" />
                    <circle cx="148" cy="127" r="2" /><circle cx="72" cy="129" r="2" />
                  </g>
                </Branch>
                <Window aria-label="Bibliotheken">
                  <TitleBar />
                  <Client>
                    <CommandBar />
                    <Body>
                      <NavigationPane />
                      <Main>
                        <Title>Bibliotheken</Title>
                        <Lead>U kunt een bibliotheek gebruiken om uw bestanden weer te geven en te organiseren op mapnaam, datum ...</Lead>
                        <Rule />
                        <Libraries>
                          {libraries.map(([name, icon]) => (
                            <Library key={name}>
                              {icon}
                              <span><Name>{name}</Name><Kind>Bibliotheek</Kind></span>
                            </Library>
                          ))}
                        </Libraries>
                      </Main>
                    </Body>
                    <Status>
                      <StackIcon />
                      <StatusText>4 items</StatusText>
                    </Status>
                  </Client>
                </Window>
                <Pointer width="30" height="42" viewBox="0 0 30 42" aria-hidden="true">
                  <path d="M4 2v31l6-6 6 12 5-3-5-11h9Z" fill="#111" opacity=".35" transform="translate(3 3)" />
                  <path d="M2 1v32l7-6 6 12 5-3-5-11h9Z" fill="#fff" stroke="#1c1f26" strokeWidth="2" strokeLinejoin="round" />
                </Pointer>
              </Desktop>
            </Bezel>
            <Side $home>
              <HomeButton aria-label="Thuisknop">
                <svg width="114" height="114" viewBox="0 0 114 114">
                  <circle cx="57" cy="57" r="55" fill="#000" opacity=".25" />
                  <path d="M6 36A55 56 0 0 1 108 36" fill="none" stroke="#38383a" strokeWidth="1.500" />
                  <path d="M1 58Q57 64 113 58A56 56 0 0 1 1 58Z" fill="url(#dish)" />
                  <rect x="38" y="38" width="37" height="38" rx="9" fill="none" stroke="#b4b4b8" strokeWidth="3" />
                </svg>
              </HomeButton>
            </Side>
            <Glare />
          </Face>
        </Rim>
      </Shell>
    </Page>
  );
}
